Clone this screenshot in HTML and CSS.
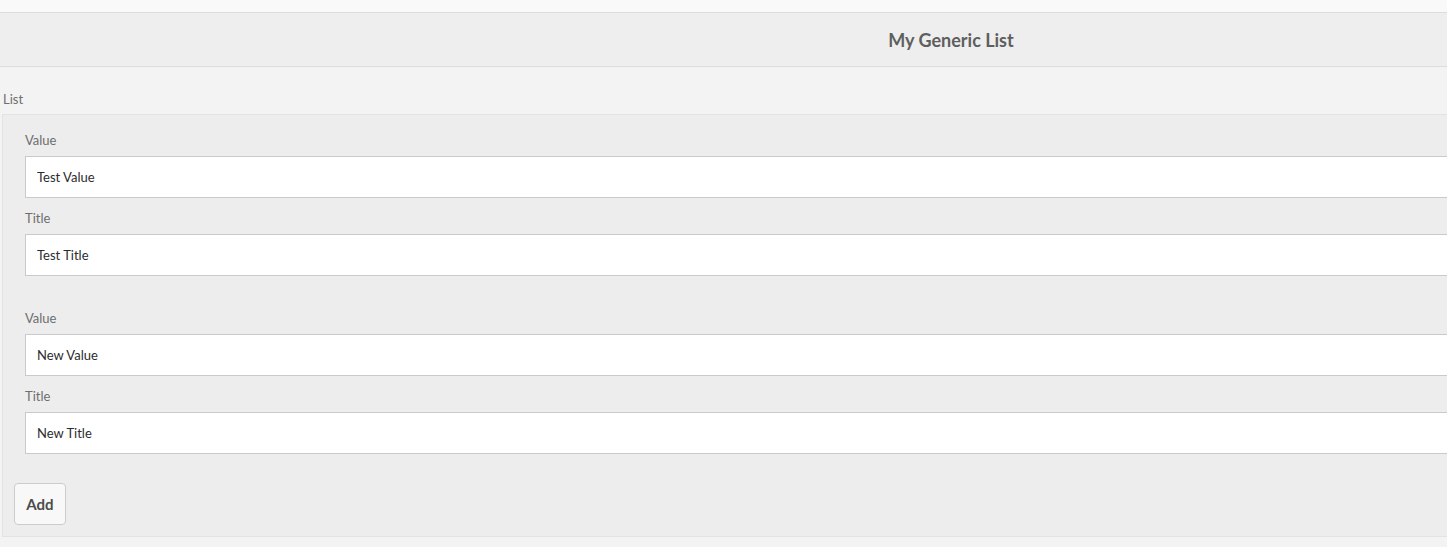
FILE: index.html
```html
<!DOCTYPE html>
<html lang="en">
<head>
<meta charset="utf-8">
<title>My Generic List</title>
<link rel="stylesheet" href="styles.css">
</head>
<body>
<div class="page">
  <div class="topbar"></div>
  <header class="header">
    <h1 class="header-title">My Generic List</h1>
  </header>
  <main class="content">
    <div class="list-label">List</div>
    <section class="panel">
      <div class="item">
        <div class="field">
          <label class="field-label">Value</label>
          <input class="field-input" type="text" value="Test Value">
        </div>
        <div class="field">
          <label class="field-label">Title</label>
          <input class="field-input" type="text" value="Test Title">
        </div>
      </div>
      <div class="item">
        <div class="field">
          <label class="field-label">Value</label>
          <input class="field-input" type="text" value="New Value">
        </div>
        <div class="field">
          <label class="field-label">Title</label>
          <input class="field-input" type="text" value="New Title">
        </div>
      </div>
      <button class="add-btn" type="button">Add</button>
    </section>
  </main>
</div>
</body>
</html>
```

FILE: styles.css
```css
html, body {
  margin: 0;
  padding: 0;
}
body {
  background: #f3f3f3;
  font-family: "Lato", "Open Sans", sans-serif;
  overflow: hidden;
}
.page {
  width: 1902px;
}
.topbar {
  height: 12px;
  background: #f9f9f9;
  border-bottom: 1px solid #dcdcdc;
}
.header {
  height: 53px;
  background: #eeeeee;
  border-bottom: 1px solid #dddddd;
  display: flex;
  align-items: center;
  justify-content: center;
}
.header-title {
  margin: 0;
  font-size: 18px;
  font-weight: 700;
  color: #5e5e5e;
  line-height: 22px;
}
.content {
  padding-top: 23px;
}
.list-label {
  font-size: 13px;
  line-height: 18px;
  color: #6e6e6e;
  padding-left: 3px;
  margin-bottom: 6px;
}
.panel {
  margin-left: 2px;
  background: #ededed;
  border: 1px solid #e3e3e3;
  padding: 16px 0 11px 22px;
  display: flex;
  flex-direction: column;
  gap: 33px;
}
.item {
  display: flex;
  flex-direction: column;
  gap: 11px;
}
.field {
  display: flex;
  flex-direction: column;
}
.field-label {
  font-size: 13px;
  line-height: 18px;
  color: #6e6e6e;
  margin-bottom: 7px;
}
.field-input {
  box-sizing: border-box;
  height: 42px;
  border: 1px solid #cacaca;
  border-radius: 0;
  background: #ffffff;
  padding: 0 11px;
  font-family: inherit;
  font-size: 13px;
  color: #2c2c2c;
  outline: none;
}
.add-btn {
  align-self: flex-start;
  margin-top: -4px;
  margin-left: -11px;
  box-sizing: border-box;
  width: 52px;
  height: 42px;
  border: 1px solid #cccccc;
  border-radius: 4px;
  background: #f8f8f8;
  font-family: inherit;
  font-size: 15px;
  font-weight: 700;
  color: #4b4b4b;
  padding: 0;
}
```
